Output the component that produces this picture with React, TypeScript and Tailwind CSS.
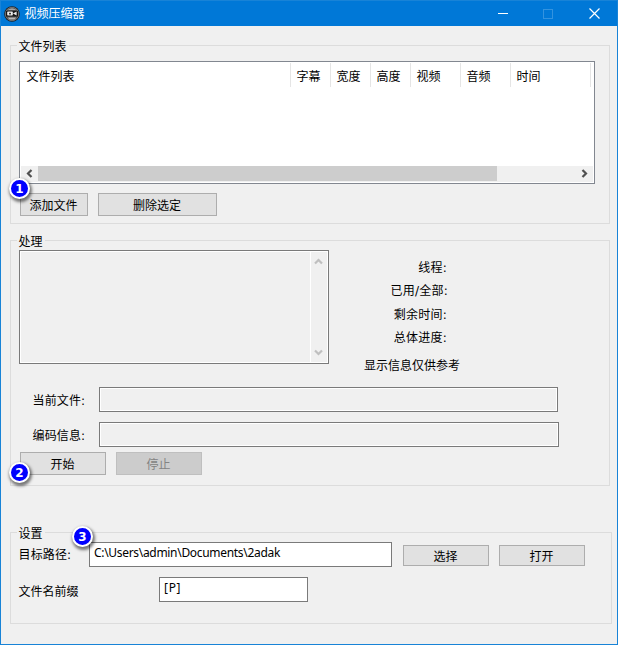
import type { ReactNode } from "react";
import clsx from "clsx";

interface Column {
  name: string;
  width: string;
}

const columns: Column[] = [
  { name: "文件列表", width: "w-[270px]" },
  { name: "字幕", width: "w-[40px]" },
  { name: "宽度", width: "w-[40px]" },
  { name: "高度", width: "w-[40px]" },
  { name: "视频", width: "w-[50px]" },
  { name: "音频", width: "w-[50px]" },
  { name: "时间", width: "w-[80px]" },
];

function AppIcon() {
  return (
    <svg width="16" height="16" viewBox="0 0 16 16">
      <circle cx="8" cy="8" r="7.8" fill="#1a1a1a" />
      <circle cx="8" cy="8" r="6.7" fill="#4a4a4a" stroke="#8d8d8d" strokeWidth="0.7" />
      <path d="M3.5 4Q8 0.5 12.5 4Z" fill="#a5a5a5" />
      <rect x="2" y="5" width="12" height="5.4" fill="#161616" />
      <rect x="3.2" y="5.6" width="5.6" height="4" rx="0.8" fill="#ededed" />
      <rect x="5" y="6.8" width="2" height="1.6" fill="#333" />
      <path d="M9 7.6L12.6 5.6V9.6Z" fill="#ededed" />
      <path d="M3.6 11.6H12.4L10.5 13.4H5.5Z" fill="#b8b8b8" />
    </svg>
  );
}

function TitleBar() {
  return (
    <header className="flex h-[25px] shrink-0 items-center bg-[#0078d7] pl-[3px] text-white">
      <AppIcon />
      <h1 className="ml-[4.5px] text-xs leading-[24px]">视频压缩器</h1>
      <div className="ml-auto flex h-full">
        <button className="flex w-[45px] items-center justify-center pl-[2px]" aria-label="minimize">
          <svg width="11" height="11" viewBox="0 0 11 11">
            <path d="M0 5.5H10" stroke="#fff" />
          </svg>
        </button>
        <button className="flex w-[46px] items-center justify-center" aria-label="maximize">
          <svg width="10" height="10" viewBox="0 0 10 10">
            <rect x="0.5" y="0.5" width="9" height="9" fill="none" stroke="#3393df" />
          </svg>
        </button>
        <button className="flex w-[46px] items-center justify-center" aria-label="close">
          <svg width="11" height="11" viewBox="0 0 11 11">
            <path d="M0.5 0.5L10.5 10.5M10.5 0.5L0.5 10.5" stroke="#fff" strokeWidth="1.2" />
          </svg>
        </button>
      </div>
    </header>
  );
}

function Group({ title, className, children }: { title: string; className?: string; children: ReactNode }) {
  return (
    <section className={clsx("relative border border-[#dcdcdc] pl-2", className)}>
      <h2 className="absolute -top-[7px] left-[6px] bg-[#f0f0f0] pl-[1.5px] pr-[2.5px] leading-4">{title}</h2>
      {children}
    </section>
  );
}

function Button({ className, disabled, children }: { className?: string; disabled?: boolean; children: ReactNode }) {
  return (
    <button
      disabled={disabled}
      className={clsx(
        "flex items-center justify-center border pr-px pt-[3px]",
        disabled ? "border-[#bfbfbf] bg-[#cccccc] text-[#838383]" : "border-[#adadad] bg-[#e1e1e1]",
        className
      )}
    >
      {children}
    </button>
  );
}

// numbered step marker, floats over the controls
function Badge({ num, className }: { num: number; className: string }) {
  return (
    <span
      className={clsx(
        "absolute flex size-[21px] items-center justify-center rounded-full border-2 border-white bg-[#0000fe] font-['DejaVu_Sans'] text-xs font-bold leading-none text-white shadow-[1px_2px_3px_1px_rgba(0,0,0,0.5)]",
        className
      )}
    >
      {num}
    </span>
  );
}

function Chevron({ d, className }: { d: string; className: string }) {
  return (
    <svg width="9" height="9" viewBox="0 0 9 9" className={className}>
      <path d={d} fill="none" stroke="currentColor" strokeWidth="2.2" />
    </svg>
  );
}

function FileTable() {
  return (
    <div className="flex h-[123px] w-[576px] flex-col justify-between border border-[#828790] bg-white p-px">
      <div className="flex h-6">
        {columns.map((c) => (
          <div key={c.name} className={clsx("shrink-0 border-r border-[#e5e5e5] pl-[5.5px] leading-[28px]", c.width)}>
            {c.name}
          </div>
        ))}
      </div>
      <div className="flex h-4 items-center bg-[#f0f0f0] pb-px">
        <Chevron d="M6.5 1L3 4.5L6.5 8" className="ml-[4px] mr-[4px] text-[#505050]" />
        <div className="h-[15px] w-[459px] bg-[#cdcdcd]" />
        <Chevron d="M2.5 1L6 4.5L2.5 8" className="ml-auto mr-[4px] text-[#505050]" />
      </div>
    </div>
  );
}

function ReadonlyField({ label, className }: { label: string; className: string }) {
  return (
    <div className="flex h-[25px] items-center">
      <span className="w-[80px] pl-[13.5px] pt-[2px] font-['DejaVu_Sans','Noto_Sans_CJK_SC',sans-serif] tracking-[0.15px]">
        {label}
      </span>
      <div className={clsx("h-full border border-[#7a7a7a]", className)}>
        <div className="h-full border border-white" />
      </div>
    </div>
  );
}

export default function App() {
  return (
    <div className="flex h-[645px] w-[618px] flex-col border border-[#1883d7] bg-[#f0f0f0] font-['Noto_Sans','Noto_Sans_CJK_SC',sans-serif] text-xs text-black">
      <TitleBar />
      <main className="pl-[9px]">
        <Group title="文件列表" className="mt-[19px] h-[179px] w-[600px] pt-[15px]">
          <FileTable />
          <div className="ml-px mt-[9px] flex gap-[10px]">
            <Button className="h-[23px] w-[68px]">添加文件</Button>
            <Button className="h-[23px] w-[119px]">删除选定</Button>
          </div>
          <Badge num={1} className="-left-[2px] top-[132px]" />
        </Group>

        <Group title="处理" className="mt-4 h-[246px] w-[600px] pt-[9px]">
          <div className="flex h-[114px]">
            <div className="flex w-[310px] justify-end border border-[#7a7a7a]">
              <div className="flex-1 border border-white" />
              <div className="flex w-[17px] flex-col items-center justify-between border border-l-0 border-white py-[5px] pr-px">
                <Chevron d="M1 6.5L4.5 3L8 6.5" className="text-[#bfbfbf]" />
                <Chevron d="M1 2.5L4.5 6L8 2.5" className="text-[#bfbfbf]" />
              </div>
            </div>
            <div className="w-[131px] pt-[6px] font-['DejaVu_Sans','Noto_Sans_CJK_SC',sans-serif]">
              <div className="pr-[12px] text-right tracking-[0.25px]">
                <p className="pr-px leading-6">线程:</p>
                <p className="leading-[23px]">已用/全部:</p>
                <p className="pr-px leading-6">剩余时间:</p>
                <p className="pr-px leading-[23px]">总体进度:</p>
              </div>
              <p className="mt-1 whitespace-nowrap text-right leading-6">显示信息仅供参考</p>
            </div>
          </div>
          <div className="mt-[23px] flex flex-col gap-[10px]">
            <ReadonlyField label="当前文件:" className="w-[459px]" />
            <ReadonlyField label="编码信息:" className="w-[460px]" />
          </div>
          <div className="ml-px mt-[5px] flex gap-[10px]">
            <Button className="h-[23px] w-[86px]">开始</Button>
            <Button className="h-[23px] w-[86px]" disabled>
              停止
            </Button>
          </div>
          <Badge num={2} className="-left-[2px] top-[221px]" />
        </Group>

        <Group title="设置" className="mt-[46px] h-[92px] w-[602px] pt-[9px]">
          <div className="flex h-[25px] items-center">
            <label className="-ml-[0.5px] w-[70.5px] font-['DejaVu_Sans','Noto_Sans_CJK_SC',sans-serif] tracking-[0.15px]">
              目标路径:
            </label>
            <input
              className="h-full w-[303px] border border-[#7a7a7a] bg-white pb-[4px] pl-[4px] tracking-[-0.31px]"
              defaultValue="C:\Users\admin\Documents\2adak"
            />
            <Button className="ml-[11px] mt-px h-[21px] w-[86px]">选择</Button>
            <Button className="ml-[10px] mt-px h-[21px] w-[86px]">打开</Button>
          </div>
          <div className="mt-[10px] flex h-[25px] items-center">
            <label className="-ml-[0.5px] w-[140.5px] pt-[4px]">文件名前缀</label>
            <input
              className="h-full w-[149px] border border-[#7a7a7a] bg-white pb-[4px] pl-[4px] tracking-[0.7px]"
              defaultValue="[P]"
            />
          </div>
          <Badge num={3} className="left-[61px] -top-[7px]" />
        </Group>
      </main>
    </div>
  );
}
